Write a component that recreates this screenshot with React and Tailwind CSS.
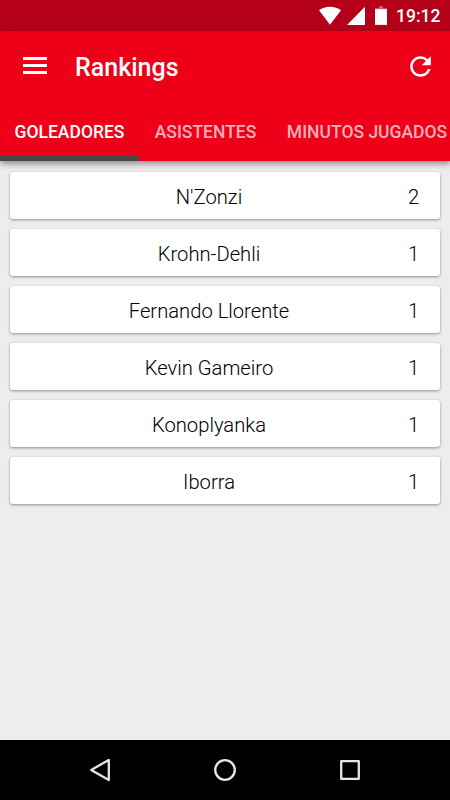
import { MdRefresh } from 'react-icons/md';

const players = [
  { name: "N'Zonzi", goals: 2 },
  { name: 'Krohn-Dehli', goals: 1 },
  { name: 'Fernando Llorente', goals: 1 },
  { name: 'Kevin Gameiro', goals: 1 },
  { name: 'Konoplyanka', goals: 1 },
  { name: 'Iborra', goals: 1 },
];

function StatusBar() {
  return (
    <div className="flex h-[31px] shrink-0 items-center justify-end bg-[#b50019] pr-[10px] text-white">
      <svg className="h-[31px] w-[77px] shrink-0" viewBox="0 0 77 31" fill="currentColor">
        <path d="M11 24.7 0 10.2C3 8 6.800 6.700 11 6.700s8 1.300 11 3.500z" />
        <path d="M46 6.800V25H28z" />
        <path d="M60 6.300h4v2h4v5H56v-5h4z" opacity="0.4" />
        <path d="M56 9.200h12V24.900H56z" />
      </svg>
      <span className="w-[44px] pt-[2px] text-[17.5px] leading-[31px] font-medium whitespace-nowrap">19:12</span>
    </div>
  );
}

function Header() {
  return (
    <header className="z-10 shrink-0 bg-[#ee0018] text-white shadow-[0_3px_6px_rgba(0,0,0,0.4)]">
      <div className="flex h-[70px] items-center pr-[14px] pl-[23px]">
        <button className="mb-[2px] flex w-[24px] flex-col gap-[4px]">
          <span className="h-[3px] w-full bg-white" />
          <span className="h-[3px] w-full bg-white" />
          <span className="h-[3px] w-full bg-white" />
        </button>
        <h1 className="ml-[28px] flex-1 pt-[3px] text-[25px] font-medium">Rankings</h1>
        <button>
          <MdRefresh className="size-[31px]" />
        </button>
      </div>

      <nav className="flex h-[60px] overflow-hidden text-[17.5px] font-medium whitespace-nowrap">
        <button className="w-[139px] shrink-0 border-b-[5px] border-[#484848] pt-[7px]">GOLEADORES</button>
        <button className="w-[133px] shrink-0 border-b-[5px] border-transparent pt-[7px] text-white/70">ASISTENTES</button>
        <button className="w-[190px] shrink-0 border-b-[5px] border-transparent pt-[7px] text-white/70">MINUTOS JUGADOS</button>
      </nav>
    </header>
  );
}

function PlayerCard({ name, goals }) {
  return (
    <div className="flex h-[47px] items-center rounded-[3px] bg-white pr-[16px] text-[20.2px] font-light text-black shadow-[0_1px_3px_rgba(0,0,0,0.4)]">
      <span className="flex-1 pt-[3px] pl-[5px] text-center">{name}</span>
      <span className="w-[21px] pt-[3px] text-center">{goals}</span>
    </div>
  );
}

function NavigationBar() {
  return (
    <div className="flex h-[60px] shrink-0 items-center justify-center gap-[101px] bg-black">
      <svg className="size-6" viewBox="0 0 24 24" fill="none" stroke="#e6e6e6" strokeWidth="2.3" strokeLinejoin="round">
        <path d="M20.800 1.900v20.200L3.200 12z" />
      </svg>
      <svg className="size-6" viewBox="0 0 24 24" fill="none" stroke="#e6e6e6" strokeWidth="2.3">
        <circle cx="12" cy="12" r="9.8" />
      </svg>
      <svg className="size-6" viewBox="0 0 24 24" fill="none" stroke="#e6e6e6" strokeWidth="2.3" strokeLinejoin="round">
        <rect x="3.200" y="3.200" width="17.600" height="17.600" />
      </svg>
    </div>
  );
}

export default function App() {
  return (
    <div className="flex h-[800px] w-[450px] flex-col overflow-hidden bg-[#ededed] font-['Roboto',sans-serif]">
      <StatusBar />
      <Header />
      <main className="flex flex-1 flex-col gap-[10px] px-[10px] pt-[11px]">
        {players.map((player) => (
          <PlayerCard key={player.name} {...player} />
        ))}
      </main>
      <NavigationBar />
    </div>
  );
}
